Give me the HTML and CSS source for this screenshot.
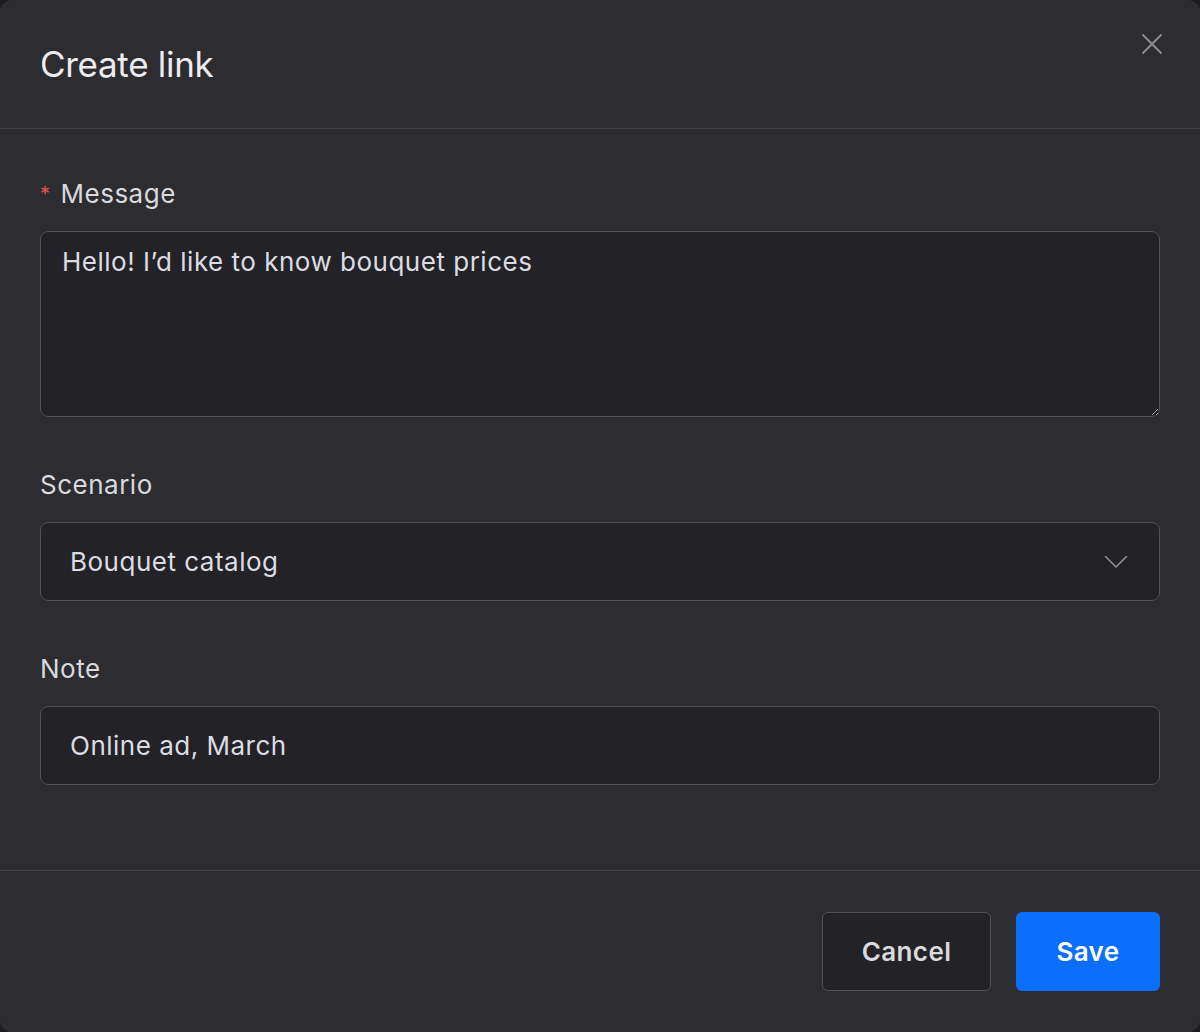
FILE: index.html
```html
<!DOCTYPE html>
<html lang="en">
<head>
  <meta charset="UTF-8">
  <meta name="viewport" content="width=device-width, initial-scale=1.0">
  <title>Create link</title>
  <link rel="stylesheet" href="styles.css">
</head>
<body>
  <div class="modal">
    <div class="modal-header">
      <h1>Create link</h1>
      <button class="close-btn" type="button" aria-label="Close">
        <svg width="20" height="20" viewBox="0 0 20 20">
          <path d="M1 1 L19 19 M19 1 L1 19" stroke="#8e8e93" stroke-width="1.8" fill="none" stroke-linecap="round"/>
        </svg>
      </button>
    </div>

    <form class="modal-body">
      <div class="field">
        <label for="message"><span class="required">*</span>Message</label>
        <textarea id="message">Hello! I’d like to know bouquet prices</textarea>
      </div>

      <div class="field">
        <label>Scenario</label>
        <div class="select">
          <span>Bouquet catalog</span>
          <svg width="24" height="14" viewBox="0 0 24 14">
            <path d="M1.5 1.5 L12 12 L22.5 1.5" stroke="#8e8e93" stroke-width="1.6" fill="none" stroke-linecap="round" stroke-linejoin="round"/>
          </svg>
        </div>
      </div>

      <div class="field">
        <label for="note">Note</label>
        <input type="text" id="note" value="Online ad, March">
      </div>
    </form>

    <div class="modal-footer">
      <button class="btn btn-cancel" type="button">Cancel</button>
      <button class="btn btn-save" type="button">Save</button>
    </div>
  </div>
</body>
</html>
```

FILE: styles.css
```css
* {
  box-sizing: border-box;
}

html,
body {
  margin: 0;
  height: 100%;
  background: #1c1c20;
}

body {
  font-family: Inter, "Noto Sans", Arial, sans-serif;
  color: #dcdce1;
  color-scheme: dark;
}

.modal {
  background: #2c2c31;
  height: 1032px;
  border-radius: 12px;
  display: flex;
  flex-direction: column;
}

.modal-header {
  height: 129px;
  border-bottom: 1px solid #414147;
  display: flex;
  align-items: center;
  justify-content: space-between;
  padding: 0 38px 0 40px;
}

.modal-header h1 {
  margin: 0;
  font-size: 35px;
  font-weight: 400;
  color: #ececf0;
  letter-spacing: -0.3px;
}

.close-btn {
  background: none;
  border: none;
  padding: 0;
  cursor: pointer;
  align-self: flex-start;
  margin-top: 34px;
  display: flex;
}

.modal-body {
  flex: 1;
  padding: 49px 40px 0;
}

.field {
  margin-bottom: 52px;
}

.field label {
  display: block;
  font-size: 26px;
  line-height: 32px;
  letter-spacing: 0.5px;
  margin-bottom: 21px;
  color: #d9d9de;
}

.required {
  color: #e5534b;
  font-size: 20px;
  margin-right: 10px;
  vertical-align: 2px;
}

textarea,
input,
.select {
  width: 100%;
  background: #232327;
  border: 1px solid #505056;
  border-radius: 8px;
  color: #dcdce2;
  font-family: inherit;
  font-size: 26px;
  letter-spacing: 0.5px;
  outline: none;
}

textarea {
  display: block;
  height: 186px;
  padding: 14px 21px;
  line-height: 32px;
  resize: vertical;
}

input {
  display: block;
  height: 79px;
  padding: 0 29px;
}

.select {
  height: 79px;
  display: flex;
  align-items: center;
  justify-content: space-between;
  padding: 0 31px 0 29px;
}

.modal-footer {
  height: 162px;
  border-top: 1px solid #414147;
  display: flex;
  justify-content: flex-end;
  align-items: center;
  gap: 25px;
  padding: 0 40px;
}

.btn {
  height: 79px;
  border-radius: 6px;
  font-family: inherit;
  font-size: 26px;
  font-weight: 600;
  letter-spacing: 0.4px;
  cursor: pointer;
}

.btn-cancel {
  width: 169px;
  background: #232327;
  border: 1px solid #505056;
  color: #d9d9de;
}

.btn-save {
  width: 144px;
  background: #0b6efd;
  border: none;
  color: #ffffff;
}

.btn-save:hover {
  background: #0a5fd8;
}
```
